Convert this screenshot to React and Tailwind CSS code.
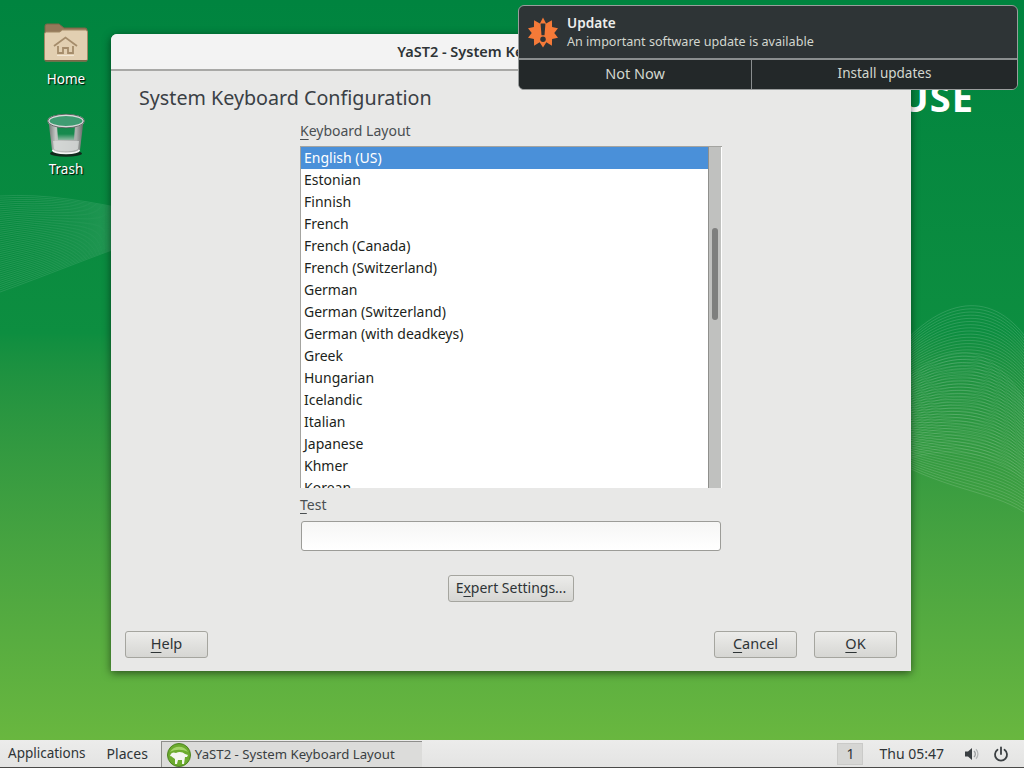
const FONT = "font-['Noto_Sans','Open_Sans',sans-serif]";

const LAYOUTS = ["English (US)","Estonian","Finnish","French","French (Canada)","French (Switzerland)","German","German (Switzerland)","German (with deadkeys)","Greek","Hungarian","Icelandic","Italian","Japanese","Khmer","Korean"];

const lerp = (a, b, t) => a + (b - a) * t;

function Waves() {
  const left = [];
  for (let i = 0; i < 46; i++) {
    const t = i / 45;
    left.push(`M0 ${196 + t * 96} C 90 ${190 + t * 70}, 190 ${232 - t * 20}, 300 ${238 - t * 30} S 480 ${196 + t * 20}, 640 ${176 + t * 40}`);
  }
  const right = [];
  for (let i = 0; i < 60; i++) {
    const t = i / 59;
    right.push(`M880 ${lerp(372, 452, t)} C ${lerp(930, 940, t)} ${lerp(300, 490, t)}, ${lerp(985, 990, t)} ${lerp(285, 490, t)}, 1024 ${lerp(335, 512, t)}`);
  }
  const second = [];
  for (let i = 0; i < 30; i++) {
    const t = i / 29;
    second.push(`M880 ${lerp(410, 470, t)} C 940 ${lerp(330, 440, t)}, 990 ${lerp(340, 450, t)}, 1024 ${lerp(400, 480, t)}`);
  }
  return (
    <svg className="absolute inset-0 w-full h-full" viewBox="0 0 1024 740" preserveAspectRatio="none" fill="none">
      <g stroke="#ffffff" strokeOpacity="0.15" strokeWidth="0.7">{left.map((d, i) => <path key={i} d={d} />)}</g>
      <g stroke="#ffffff" strokeOpacity="0.2" strokeWidth="0.7">{right.map((d, i) => <path key={i} d={d} />)}</g>
      <g stroke="#ffffff" strokeOpacity="0.12" strokeWidth="0.7">{second.map((d, i) => <path key={i} d={d} />)}</g>
    </svg>
  );
}

function FolderIcon() {
  return (
    <svg width="46" height="42" viewBox="0 0 46 42">
      <path d="M2 5 a2 2 0 0 1 2-2 h12 l5 4 h21 a2 2 0 0 1 2 2 v10 H2z" fill="#94795a" stroke="#7d6547" />
      <path d="M1.5 13 a2 2 0 0 1 2-2 h13 l3-2 h23 a2 2 0 0 1 2 2 v27 a2 2 0 0 1-2 2 h-39 a2 2 0 0 1-2-2z" fill="#e2cfb1" stroke="#a28a66" />
      <path d="M2 39 h42 v1.5 H2z" fill="#7d6547" />
      <g fill="none" stroke="#a58c6b" strokeWidth="1.8">
        <path d="M11 25 L22.5 16.5 L34 25" />
        <path d="M15 25 v7 h5 v-5 h5 v5 h5 v-7" />
      </g>
      <path d="M14 34.5 h17" stroke="#f3e8d6" />
    </svg>
  );
}

function TrashIcon() {
  return (
    <svg width="40" height="44" viewBox="0 0 40 44">
      <defs>
        <linearGradient id="tb" x1="0" x2="1" y1="0" y2="0">
          <stop offset="0" stopColor="#6f7572" />
          <stop offset="0.2" stopColor="#c3c6c4" />
          <stop offset="0.8" stopColor="#a9adab" />
          <stop offset="1" stopColor="#626664" />
        </linearGradient>
        <linearGradient id="tg" x1="0" x2="0" y1="0" y2="1">
          <stop offset="0" stopColor="#16894c" />
          <stop offset="0.6" stopColor="#178a4e" />
          <stop offset="1" stopColor="#8fb9a2" />
        </linearGradient>
      </defs>
      <ellipse cx="20" cy="40.5" rx="16" ry="3.2" fill="#141414" opacity="0.8" />
      <path d="M2.5 8 L6 37 C8 42 32 42 34 37 L37.5 8z" fill="url(#tb)" />
      <path d="M11 12 L12 27 H28 L29 12z" fill="url(#tg)" />
      <path d="M7 28 L8 36 C12 39 28 39 32 36 L33 28z" fill="#dcdedd" opacity="0.7" />
      <path d="M6.5 37 C9 41.5 31 41.5 33.5 37" stroke="#f4f5f4" strokeWidth="1.6" fill="none" />
      <ellipse cx="20" cy="8" rx="17.5" ry="6" fill="#3f9c72" stroke="#d9dbda" strokeWidth="2" />
      <ellipse cx="20" cy="8" rx="18.3" ry="6.8" fill="none" stroke="#4d514f" strokeWidth="0.8" />
    </svg>
  );
}

function Burst() {
  return (
    <svg width="30" height="31" viewBox="0 0 32 32">
      <path d="M16 0 L19.3 6.5 L25.5 3 L25.7 10.2 L32 11.5 L28 16.5 L32 21.5 L25.7 22.8 L25.5 30 L19.6 26.3 L16 32 L12.4 26.3 L6.5 30 L6.3 22.8 L0 21.5 L4 16.5 L0 11.5 L6.3 10.2 L6.5 3 L12.7 6.5z" fill="#f57a38" />
      <path d="M13.4 6.5 h5.2 l-1 12.5 h-3.2z" fill="#2e3436" />
      <circle cx="16" cy="23.2" r="2.9" fill="#2e3436" />
    </svg>
  );
}

function YastIcon() {
  return (
    <svg width="24" height="24" viewBox="0 0 24 24">
      <circle cx="12" cy="12" r="11.5" fill="#6cab2e" stroke="#4d8322" />
      <path d="M3 9 C7 2 17 2 21 9 C16 6 8 6 3 9z" fill="#a5d56c" />
      <path d="M3 13 C4 9 7 9 9 10 C12 8 16 9 18 11 L21 12 L20 14 L18 14 L17 21 H15 L15 17 H11 L10 21 H8 L8 16 C6 15 5 13 3 13z" fill="#f4f6f0" />
    </svg>
  );
}

function Mn({ c }) {
  return <span className="underline underline-offset-[3px] decoration-1">{c}</span>;
}

function Btn({ className, children }) {
  return (
    <button className={`h-[27px] pb-[2px] rounded-[3px] border border-[#a5a59f] bg-gradient-to-b from-[#ececea] to-[#d6d6d3] text-[#2e3436] flex items-center justify-center ${className}`}>
      {children}
    </button>
  );
}

function DeskIcon({ icon, label, className, labelClass }) {
  return (
    <div className={`flex flex-col items-center ${className}`}>
      {icon}
      <span className={`text-[13.5px] leading-[20px] text-white [text-shadow:1px_1px_1px_#000] ${labelClass}`}>{label}</span>
    </div>
  );
}

export default function App() {
  return (
    <div className={`${FONT} relative w-[1024px] h-[768px] overflow-hidden flex flex-col`}>
      <main className="relative flex-1 bg-gradient-to-b from-[#00843f] via-[#0d8e40] via-45% to-[#69b73f]">
        <Waves />
        <span className="absolute right-[50px] top-[75px] text-[38px] leading-[44px] font-bold tracking-[1px] text-white">SUSE</span>

        <div className="relative w-[132px] flex flex-col items-center pt-[21px]">
          <DeskIcon icon={<FolderIcon />} label="Home" labelClass="mt-[6px]" />
          <DeskIcon icon={<TrashIcon />} label="Trash" className="mt-[24px]" labelClass="mt-[2px]" />
        </div>

        {/* YaST window */}
        <section className="absolute left-[111px] top-[34px] w-[800px] h-[637px] flex flex-col bg-[#e8e8e7] rounded-t-[6px] shadow-[0_2px_8px_rgba(0,0,0,0.55)]">
          <header className="h-[37px] shrink-0 flex items-center justify-center rounded-t-[6px] bg-[#f3f3f3] border-b-[2px] border-[#a8a8a6] text-[14.5px] font-semibold text-[#2e3436] pt-[1px]">
            YaST2 - System Keyboard Layout
          </header>
          <div className="flex-1 flex flex-col">
            <h1 className="pl-[28px] pt-[13px] text-[19.7px] leading-[28px] font-normal text-[#3a4045]">System Keyboard Configuration</h1>
            <div className="self-center w-[422px] flex flex-col mt-[9px]">
              <label className="text-[14px] leading-[20px] text-[#4a4f52]"><Mn c="K" />eyboard Layout</label>
              <div className="mt-[5px] h-[342px] flex overflow-hidden border border-[#a4a4a0] border-b-0 border-r-0 bg-white">
                <ul className="flex-1 overflow-hidden">
                  {LAYOUTS.map((l, i) => (
                    <li key={l} className={`h-[22px] pl-[3px] text-[14px] leading-[21px] ${i === 0 ? "bg-[#4a90d9] text-white" : "text-[#1c1f20]"}`}>{l}</li>
                  ))}
                </ul>
                <div className="w-[13px] mr-[1px] bg-[#c0c1bf] border-l border-[#8f8f8c] pt-[81px] pl-[3px]">
                  <div className="w-[6px] h-[92px] rounded-full bg-[#7e7f7e]" />
                </div>
              </div>
              <label className="mt-[7px] text-[14px] leading-[20px] text-[#4a4f52]"><Mn c="T" />est</label>
              <div className="mt-[6px] ml-[1px] mr-[1px] h-[30px] rounded-[3px] border border-[#9c9c98] bg-gradient-to-b from-[#f6f6f5] to-white" />
              <Btn className="mt-[24px] self-center w-[126px] text-[14px]">
                <span>E<Mn c="x" />pert Settings...</span>
              </Btn>
            </div>
            <footer className="mt-auto mb-[13px] px-[14px] flex items-center text-[14.5px]">
              <Btn className="w-[83px]"><span><Mn c="H" />elp</span></Btn>
              <div className="flex-1" />
              <Btn className="w-[83px]"><span><Mn c="C" />ancel</span></Btn>
              <Btn className="w-[83px] ml-[17px]"><span><Mn c="O" />K</span></Btn>
            </footer>
          </div>
        </section>

        {/* Notification */}
        <aside className="absolute left-[518px] top-[5px] w-[500px] h-[85px] flex flex-col rounded-[6px] border border-[#9a9d9d] bg-[#2e3436] overflow-hidden">
          <div className="h-[54px] shrink-0 flex items-center pl-[9px] border-b-[2px] border-[#8a8e8f] pt-[1px]">
            <Burst />
            <div className="ml-[9px] flex flex-col">
              <span className="text-[13.6px] leading-[18px] font-semibold text-[#eeeeec]">Update</span>
              <span className="text-[12.6px] leading-[18px] text-[#d3d7cf] pt-[1px]">An important software update is available</span>
            </div>
          </div>
          <div className="flex-1 flex bg-[#232829] text-[#d3d7cf] pb-[2px]">
            <div className="w-[233px] -mb-[2px] pb-[2px] flex items-center justify-center border-r border-[#8a8e8f] text-[14.5px]">Not Now</div>
            <div className="flex-1 flex items-center justify-center text-[13.5px]">Install updates</div>
          </div>
        </aside>
      </main>

      {/* Panel */}
      <nav className="relative h-[28px] shrink-0 flex items-stretch bg-gradient-to-b from-[#ececeb] to-[#e4e4e3] border-b border-[#4a4a48] text-[14px] text-[#2e3436]">
        <span className="ml-[8px] self-center text-[13.5px]">Applications</span>
        <span className="ml-[21px] self-center">Places</span>
        <div className="ml-[13px] mt-[1px] w-[261px] flex items-center gap-[4px] pl-[5px] bg-[#dcdcda] border-l border-t border-[#8e8e8b] text-[13.2px] text-[#3a3f42]">
          <YastIcon />
          <span>YaST2 - System Keyboard Layout</span>
        </div>
        <div className="flex-1" />
        <div className="self-center w-[26px] h-[22px] flex items-center justify-center bg-[#d6d6d4] border border-[#cacac8]">1</div>
        <span className="ml-[16px] self-center">Thu 05:47</span>
        <svg className="ml-[20px] self-center" width="16" height="16" viewBox="0 0 16 16" fill="none">
          <path d="M1 5.5 h3 l4-3.5 v12 l-4-3.5 h-3z" fill="#3a3f42" />
          <path d="M10 5 a4 4 0 0 1 0 6" stroke="#9a9d9e" strokeWidth="1.3" />
          <path d="M12 3.2 a7 7 0 0 1 0 9.6" stroke="#b5b7b8" strokeWidth="1.3" />
        </svg>
        <svg className="ml-[13px] mr-[15px] self-center" width="16" height="16" viewBox="0 0 16 16" fill="none" stroke="#3a3f42" strokeWidth="1.8" strokeLinecap="round">
          <path d="M8 1.5 v6.5" />
          <path d="M4.5 3.8 a6 6 0 1 0 7 0" />
        </svg>
      </nav>
    </div>
  );
}
